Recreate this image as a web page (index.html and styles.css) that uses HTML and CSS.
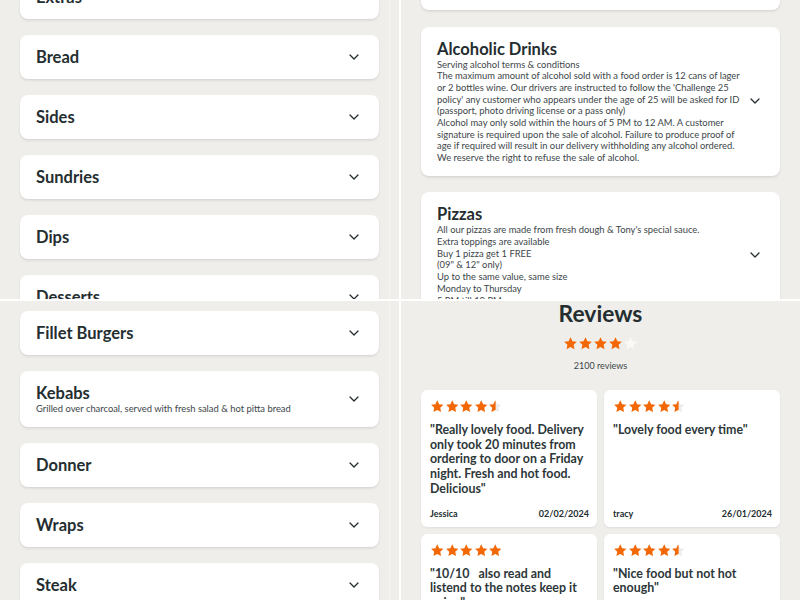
FILE: index.html
```html
<!DOCTYPE html>
<html lang="en">
<head>
<meta charset="utf-8">
<title>Menu and reviews</title>
<link rel="stylesheet" href="styles.css">
</head>
<body>
<svg class="sprite" aria-hidden="true">
  <defs>
    <symbol id="chev" viewBox="0 0 18 18"><path d="M5 7 L9 11 L13 7" fill="none" stroke="currentColor" stroke-width="1.3" stroke-linecap="round" stroke-linejoin="round"/></symbol>
    <symbol id="star" viewBox="0 0 24 24"><path d="M12 1.8l3.1 6.4 7 .9-5.1 4.9 1.3 7L12 17.6 5.7 21l1.3-7L1.9 9.1l7-.9z"/></symbol>
    <clipPath id="half"><rect x="0" y="0" width="12.6" height="24"/></clipPath>
    <symbol id="star-half" viewBox="0 0 24 24"><path fill="#ecebe8" d="M12 1.8l3.1 6.4 7 .9-5.1 4.9 1.3 7L12 17.6 5.7 21l1.3-7L1.9 9.1l7-.9z"/><path fill="#f36805" clip-path="url(#half)" d="M12 1.8l3.1 6.4 7 .9-5.1 4.9 1.3 7L12 17.6 5.7 21l1.3-7L1.9 9.1l7-.9z"/></symbol>
  </defs>
</svg>
<main class="shots">
  <section class="panel">
    <div class="menu-list menu-list--tl">
      <div class="cat"><div class="cat-text"><h3 class="cat-title">Extras</h3></div><svg class="chev"><use href="#chev"/></svg></div>
      <div class="cat"><div class="cat-text"><h3 class="cat-title">Bread</h3></div><svg class="chev"><use href="#chev"/></svg></div>
      <div class="cat"><div class="cat-text"><h3 class="cat-title">Sides</h3></div><svg class="chev"><use href="#chev"/></svg></div>
      <div class="cat"><div class="cat-text"><h3 class="cat-title">Sundries</h3></div><svg class="chev"><use href="#chev"/></svg></div>
      <div class="cat"><div class="cat-text"><h3 class="cat-title">Dips</h3></div><svg class="chev"><use href="#chev"/></svg></div>
      <div class="cat"><div class="cat-text"><h3 class="cat-title">Desserts</h3></div><svg class="chev"><use href="#chev"/></svg></div>
    </div>
    <div class="edge"></div>
  </section>

  <section class="panel">
    <div class="menu-list menu-list--tr">
      <div class="cat"><div class="cat-text"><h3 class="cat-title">Soft Drinks</h3></div><svg class="chev"><use href="#chev"/></svg></div>
      <div class="cat">
        <div class="cat-text">
          <h3 class="cat-title">Alcoholic Drinks</h3>
          <p class="cat-desc">Serving alcohol terms &amp; conditions<br>The maximum amount of alcohol sold with a food order is 12 cans of lager<br>or 2 bottles wine. Our drivers are instructed to follow the 'Challenge 25<br>policy' any customer who appears under the age of 25 will be asked for ID<br>(passport, photo driving license or a pass only)<br>Alcohol may only sold within the hours of 5 PM to 12 AM. A customer<br>signature is required upon the sale of alcohol. Failure to produce proof of<br>age if required will result in our delivery withholding any alcohol ordered.<br>We reserve the right to refuse the sale of alcohol.</p>
        </div>
        <svg class="chev"><use href="#chev"/></svg>
      </div>
      <div class="cat">
        <div class="cat-text">
          <h3 class="cat-title">Pizzas</h3>
          <p class="cat-desc">All our pizzas are made from fresh dough &amp; Tony's special sauce.<br>Extra toppings are available<br>Buy 1 pizza get 1 FREE<br>(09" &amp; 12" only)<br>Up to the same value, same size<br>Monday to Thursday<br>5 PM till 10 PM</p>
        </div>
        <svg class="chev"><use href="#chev"/></svg>
      </div>
    </div>
  </section>

  <section class="panel">
    <div class="menu-list menu-list--bl">
      <div class="cat"><div class="cat-text"><h3 class="cat-title">Fillet Burgers</h3></div><svg class="chev"><use href="#chev"/></svg></div>
      <div class="cat"><div class="cat-text"><h3 class="cat-title">Kebabs</h3><p class="cat-desc">Grilled over charcoal, served with fresh salad &amp; hot pitta bread</p></div><svg class="chev"><use href="#chev"/></svg></div>
      <div class="cat"><div class="cat-text"><h3 class="cat-title">Donner</h3></div><svg class="chev"><use href="#chev"/></svg></div>
      <div class="cat"><div class="cat-text"><h3 class="cat-title">Wraps</h3></div><svg class="chev"><use href="#chev"/></svg></div>
      <div class="cat"><div class="cat-text"><h3 class="cat-title">Steak</h3></div><svg class="chev"><use href="#chev"/></svg></div>
    </div>
    <div class="edge"></div>
  </section>

  <section class="panel">
    <div class="reviews">
      <h2 class="reviews-title">Reviews</h2>
      <div class="stars stars--big">
        <svg class="star"><use href="#star"/></svg><svg class="star"><use href="#star"/></svg><svg class="star"><use href="#star"/></svg><svg class="star"><use href="#star"/></svg><svg class="star star--off"><use href="#star"/></svg>
      </div>
      <p class="reviews-count">2100 reviews</p>
      <div class="review-grid">
        <article class="review">
          <div class="stars"><svg class="star"><use href="#star"/></svg><svg class="star"><use href="#star"/></svg><svg class="star"><use href="#star"/></svg><svg class="star"><use href="#star"/></svg><svg class="star"><use href="#star-half"/></svg></div>
          <p class="review-text">"Really lovely food. Delivery only took 20 minutes from ordering to door on a Friday night. Fresh and hot food. Delicious"</p>
          <div class="review-foot"><span>Jessica</span><span>02/02/2024</span></div>
        </article>
        <article class="review">
          <div class="stars"><svg class="star"><use href="#star"/></svg><svg class="star"><use href="#star"/></svg><svg class="star"><use href="#star"/></svg><svg class="star"><use href="#star"/></svg><svg class="star"><use href="#star-half"/></svg></div>
          <p class="review-text">"Lovely food every time"</p>
          <div class="review-foot"><span>tracy</span><span>26/01/2024</span></div>
        </article>
        <article class="review">
          <div class="stars"><svg class="star"><use href="#star"/></svg><svg class="star"><use href="#star"/></svg><svg class="star"><use href="#star"/></svg><svg class="star"><use href="#star"/></svg><svg class="star"><use href="#star"/></svg></div>
          <p class="review-text">"10/10 &nbsp; also read and listend to the notes keep it going"</p>
          <div class="review-foot"><span>Sam</span><span>20/01/2024</span></div>
        </article>
        <article class="review">
          <div class="stars"><svg class="star"><use href="#star"/></svg><svg class="star"><use href="#star"/></svg><svg class="star"><use href="#star"/></svg><svg class="star"><use href="#star"/></svg><svg class="star"><use href="#star-half"/></svg></div>
          <p class="review-text">"Nice food but not hot enough"</p>
          <div class="review-foot"><span>Lee</span><span>18/01/2024</span></div>
        </article>
      </div>
    </div>
  </section>
</main>
</body>
</html>
```

FILE: styles.css
```css
* { box-sizing: border-box; }

html, body {
  margin: 0;
  padding: 0;
  width: 800px;
  height: 600px;
  overflow: hidden;
  background: #ffffff;
  font-family: Lato, "Noto Sans", sans-serif;
  color: #242e30;
}

.sprite {
  position: absolute;
  width: 0;
  height: 0;
  overflow: hidden;
}

.shots {
  display: grid;
  grid-template-columns: 399px 399px;
  grid-template-rows: 299px 299px;
  gap: 2px;
  width: 800px;
  height: 600px;
  background: #ffffff;
}

.panel {
  position: relative;
  overflow: hidden;
  background: #efeeea;
}

.edge {
  position: absolute;
  top: 0;
  bottom: 0;
  left: 389px;
  width: 1px;
  background: #f6f5f2;
}

.menu-list {
  display: flex;
  flex-direction: column;
  gap: 16px;
  padding: 0 20px;
}

.menu-list--tl { margin-top: -25px; }
.menu-list--tr { margin-top: -34px; gap: 16.5px; }
.menu-list--bl { margin-top: 10px; }

.cat {
  display: flex;
  align-items: center;
  gap: 3px;
  background: #ffffff;
  border-radius: 8px;
  padding: 12px 16px 12px 16px;
  box-shadow: 0 1px 2px rgba(36, 46, 48, 0.08), 0 2px 3px rgba(36, 46, 48, 0.05);
}

.cat-text {
  flex: 1;
  min-width: 0;
}

.cat-title {
  margin: 0;
  font-size: 16.5px;
  line-height: 20px;
  font-weight: 700;
  color: #242e30;
}

.cat-desc {
  margin: 0;
  font-size: 9.4px;
  line-height: 11.7px;
  color: #3c4649;
}

.chev {
  flex: none;
  width: 18px;
  height: 18px;
  color: #242e30;
}

/* Reviews */
.reviews {
  padding: 0 20px;
  text-align: center;
}

.reviews-title {
  margin: 0;
  font-size: 22.8px;
  line-height: 24px;
  font-weight: 700;
}

.stars {
  display: flex;
  gap: 0;
}

.stars--big {
  justify-content: center;
  margin-top: 11px;
}

.star {
  width: 15px;
  height: 15px;
  fill: #f36805;
}

.star--off {
  fill: #faf9f7;
}

.reviews-count {
  margin: 9px 0 0;
  font-size: 9px;
  line-height: 12px;
  color: #3c4649;
}

.review-grid {
  display: grid;
  grid-template-columns: 1fr 1fr;
  gap: 7px;
  margin-top: 18px;
  text-align: left;
}

.review {
  display: flex;
  flex-direction: column;
  background: #ffffff;
  border-radius: 6px;
  padding: 9px 8px 7px 9px;
  box-shadow: 0 1px 2px rgba(36, 46, 48, 0.08);
}

.review .star {
  width: 14.5px;
  height: 15px;
}

.review-text {
  margin: 9px 0 0;
  font-size: 12.4px;
  line-height: 14.7px;
  font-weight: 700;
  color: #2d3739;
}

.review-foot {
  display: flex;
  justify-content: space-between;
  margin-top: auto;
  padding-top: 11px;
  font-size: 9px;
  line-height: 12px;
  font-weight: 700;
  color: #242e30;
}
```
